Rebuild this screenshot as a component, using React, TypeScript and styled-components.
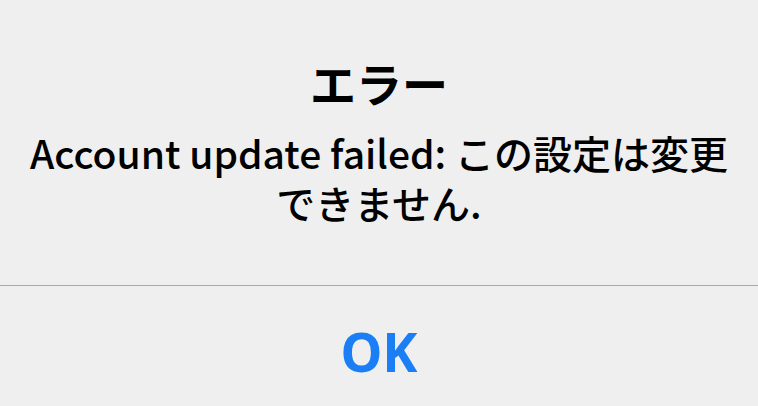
import styled, { createGlobalStyle } from "styled-components";

const GlobalStyle = createGlobalStyle`
  html, body {
    margin: 0;
    padding: 0;
    background: #efefef;
  }
  body {
    font-family: "Noto Sans CJK JP", "Noto Sans", sans-serif;
    -webkit-font-smoothing: antialiased;
  }
`;

const Alert = styled.div`
  width: 758px;
  height: 406px;
  display: flex;
  flex-direction: column;
  background: #efefef;
  color: #000;
`;

const Body = styled.div`
  height: 285px;
  box-sizing: border-box;
  padding-top: 52px;
  display: flex;
  flex-direction: column;
  align-items: center;
  text-align: center;
`;

const Title = styled.div`
  font-size: 46px;
  font-weight: 700;
  line-height: 60px;
`;

const Message = styled.div`
  margin-top: 15px;
  font-size: 39px;
  font-weight: 500;
  line-height: 50px;
  white-space: nowrap;
`;

const Divider = styled.div`
  height: 1px;
  background: #a9a9a9;
`;

const Button = styled.button`
  flex: 1;
  border: none;
  background: transparent;
  color: #1b7ef5;
  font-family: "Noto Sans", "Liberation Sans", sans-serif;
  font-size: 53px;
  font-weight: 700;
  padding: 0;
  padding-top: 10px;
`;

const App = () => (
  <>
    <GlobalStyle />
    <Alert>
      <Body>
        <Title>エラー</Title>
        <Message>
          Account update failed: この設定は変更
          <br />
          できません.
        </Message>
      </Body>
      <Divider />
      <Button>OK</Button>
    </Alert>
  </>
);

export default App;
